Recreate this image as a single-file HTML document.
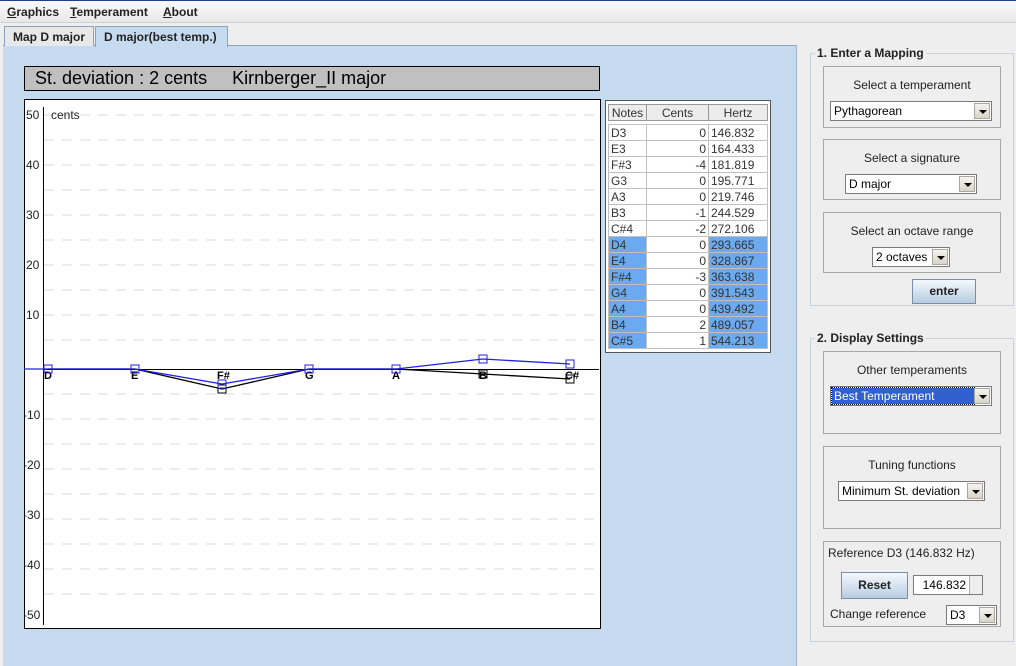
<!DOCTYPE html>
<html><head><style>
*{margin:0;padding:0;box-sizing:border-box}
body{width:1016px;height:666px;background:#eeeeee;font-family:"Liberation Sans",Arial,sans-serif;font-size:12px;position:relative;overflow:hidden;color:#000}
.a{position:absolute}
.menu{left:0;top:0;width:1016px;height:23px;background:linear-gradient(#fafafa,#e8e8e8);border-top:1px solid #1c3f8f;border-bottom:1px solid #d0d0d0}
.menu span{position:absolute;top:4px;font-weight:bold;font-size:12px;color:#222}
.tab{top:26px;height:20px;border:1px solid #8da2bd;border-bottom:none;font-weight:bold;font-size:12px;padding:3px 8px;color:#222}
.fs{border:1px solid #c8d2dc}
.fs .lg{position:absolute;top:-8px;left:4px;background:#eeeeee;font-weight:bold;padding:0 2px;font-size:12px;color:#222}
.box{border:1px solid #a8a8a8;text-align:center;font-size:12px;color:#222}
.cb{position:absolute;background:#fff;border:1px solid #7a7a7a;height:20px;font-size:12px;padding:2px 3px;text-align:left}
.cb .ar{position:absolute;right:1px;top:1px;width:16px;height:16px;background:linear-gradient(#f4f3ee,#d8d4c8);border:1px solid #a8a8a0}
.cb .ar:after{content:"";position:absolute;left:4px;top:6px;border-left:4px solid transparent;border-right:4px solid transparent;border-top:4px solid #000}
.btn{position:absolute;background:linear-gradient(#f4f8fc,#b8cde2);border:1px solid #7a8ea8;font-weight:bold;text-align:center;font-size:12px;color:#222}
table{border-collapse:collapse;font-size:12px}
td{height:16px;padding:0 2px;border:1px solid #c0c0c0;color:#333}
.hl td.n,.hl td.h{background:#6aaaf0}
</style></head><body>
<div class="a menu"><span style="left:7px"><u>G</u>raphics</span><span style="left:70px"><u>T</u>emperament</span><span style="left:163px"><u>A</u>bout</span></div>
<div class="a" style="left:3px;top:45px;width:794px;height:621px;background:#c6dbef;border-top:1px solid #8da2bd;border-right:1px solid #a0b4c8"></div>
<div class="a tab" style="left:4px;background:#e8e8e8">Map D major</div>
<div class="a tab" style="left:95px;width:133px;height:21px;background:#c6dbef">D major(best temp.)</div>
<div class="a" style="left:24px;top:66px;width:576px;height:25px;background:#c0c0c0;border:1px solid #000;font-size:18px;padding:1px 0 0 10px;white-space:pre">St. deviation : 2 cents     Kirnberger_II major</div>
<svg class="a" style="left:24px;top:99px" width="577" height="530" font-family="Liberation Sans,Arial,sans-serif" font-size="12">
<rect x="0.5" y="0.5" width="576" height="529" fill="#fff" stroke="#000"/>
<g stroke="#d8d8d8" stroke-dasharray="10,8">
<line x1="20" x2="575" y1="16" y2="16"/><line x1="20" x2="575" y1="41" y2="41"/><line x1="20" x2="575" y1="66" y2="66"/><line x1="20" x2="575" y1="91" y2="91"/><line x1="20" x2="575" y1="116" y2="116"/><line x1="20" x2="575" y1="141" y2="141"/><line x1="20" x2="575" y1="166" y2="166"/><line x1="20" x2="575" y1="191" y2="191"/><line x1="20" x2="575" y1="216" y2="216"/><line x1="20" x2="575" y1="241" y2="241"/><line x1="20" x2="575" y1="295" y2="295"/><line x1="20" x2="575" y1="320" y2="320"/><line x1="20" x2="575" y1="345" y2="345"/><line x1="20" x2="575" y1="370" y2="370"/><line x1="20" x2="575" y1="395" y2="395"/><line x1="20" x2="575" y1="420" y2="420"/><line x1="20" x2="575" y1="445" y2="445"/><line x1="20" x2="575" y1="470" y2="470"/><line x1="20" x2="575" y1="495" y2="495"/>
</g>
<line x1="19.5" x2="19.5" y1="8" y2="526" stroke="#000"/>
<line x1="19" x2="575" y1="270.5" y2="270.5" stroke="#000"/>
<g fill="#222"><text x="2" y="20">50</text><text x="27" y="20">cents</text><text x="2" y="70">40</text><text x="2" y="120">30</text><text x="2" y="170">20</text><text x="2" y="220">10</text><text x="-1" y="320">-10</text><text x="-1" y="370">-20</text><text x="-1" y="420">-30</text><text x="-1" y="470">-40</text><text x="-1" y="520">-50</text></g>
<g font-weight="bold" font-size="11"><text x="20" y="280">D</text><text x="107" y="280">E</text><text x="193" y="280">F#</text><text x="281" y="280">G</text><text x="368" y="280">A</text><text x="455" y="280">B</text><text x="541" y="280">C#</text></g>
<polyline fill="none" stroke="#000" stroke-width="1.3" points="24,270 111,270 198,290 285,270 372,270 459,275 546,280"/>
<g fill="none" stroke="#000"><rect x="20" y="266" width="8" height="8"/><rect x="107" y="266" width="8" height="8"/><rect x="194" y="286" width="8" height="8"/><rect x="281" y="266" width="8" height="8"/><rect x="368" y="266" width="8" height="8"/><rect x="455" y="271" width="8" height="8"/><rect x="542" y="276" width="8" height="8"/></g>
<polyline fill="none" stroke="#2020e0" stroke-width="1.3" points="0,270 24,270 111,270 198,285 285,270 372,270 459,260 546,265"/>
<g fill="none" stroke="#2020e0"><rect x="20" y="266" width="8" height="8"/><rect x="107" y="266" width="8" height="8"/><rect x="194" y="281" width="8" height="8"/><rect x="281" y="266" width="8" height="8"/><rect x="368" y="266" width="8" height="8"/><rect x="455" y="256" width="8" height="8"/><rect x="542" y="261" width="8" height="8"/></g>
</svg>
<div class="a" style="left:605px;top:100px;width:166px;height:253px;background:#fff;border:1px solid #555">
<table style="position:absolute;left:2px;top:3px;width:160px">
<tr style="background:#ececec"><td style="width:38px;text-align:center;border-color:#999">Notes</td><td style="width:62px;text-align:center;border-color:#999">Cents</td><td style="text-align:center;border-color:#999">Hertz</td></tr>
<tr><td colspan="3" style="height:4px;border:none;padding:0"></td></tr>
<tr><td class="n">D3</td><td align="right">0</td><td class="h">146.832</td></tr>
<tr><td class="n">E3</td><td align="right">0</td><td class="h">164.433</td></tr>
<tr><td class="n">F#3</td><td align="right">-4</td><td class="h">181.819</td></tr>
<tr><td class="n">G3</td><td align="right">0</td><td class="h">195.771</td></tr>
<tr><td class="n">A3</td><td align="right">0</td><td class="h">219.746</td></tr>
<tr><td class="n">B3</td><td align="right">-1</td><td class="h">244.529</td></tr>
<tr><td class="n">C#4</td><td align="right">-2</td><td class="h">272.106</td></tr>
<tr class="hl"><td class="n">D4</td><td align="right">0</td><td class="h">293.665</td></tr>
<tr class="hl"><td class="n">E4</td><td align="right">0</td><td class="h">328.867</td></tr>
<tr class="hl"><td class="n">F#4</td><td align="right">-3</td><td class="h">363.638</td></tr>
<tr class="hl"><td class="n">G4</td><td align="right">0</td><td class="h">391.543</td></tr>
<tr class="hl"><td class="n">A4</td><td align="right">0</td><td class="h">439.492</td></tr>
<tr class="hl"><td class="n">B4</td><td align="right">2</td><td class="h">489.057</td></tr>
<tr class="hl"><td class="n">C#5</td><td align="right">1</td><td class="h">544.213</td></tr>
</table></div>

<div class="a fs" style="left:810px;top:53px;width:204px;height:253px"><div class="lg">1. Enter a Mapping</div></div>
<div class="a box" style="left:823px;top:66px;width:178px;height:62px;padding-top:11px">Select a temperament</div>
<div class="a cb" style="left:830px;top:101px;width:162px">Pythagorean<div class="ar"></div></div>
<div class="a box" style="left:823px;top:139px;width:178px;height:61px;padding-top:11px">Select a signature</div>
<div class="a cb" style="left:845px;top:174px;width:132px">D major<div class="ar"></div></div>
<div class="a box" style="left:823px;top:212px;width:178px;height:61px;padding-top:11px">Select an octave range</div>
<div class="a cb" style="left:872px;top:247px;width:78px">2 octaves<div class="ar"></div></div>
<div class="btn" style="left:912px;top:279px;width:64px;height:25px;line-height:23px">enter</div>

<div class="a fs" style="left:810px;top:338px;width:204px;height:304px"><div class="lg">2. Display Settings</div></div>
<div class="a box" style="left:823px;top:351px;width:178px;height:83px;padding-top:11px">Other temperaments</div>
<div class="a cb" style="left:830px;top:386px;width:162px;padding:1px"><div style="background:#3060d0;color:#fff;height:16px;width:142px;padding:1px 2px;outline:1px dotted #000">Best Temperament</div><div class="ar"></div></div>
<div class="a box" style="left:823px;top:446px;width:178px;height:83px;padding-top:11px">Tuning functions</div>
<div class="a cb" style="left:838px;top:481px;width:147px">Minimum St. deviation<div class="ar"></div></div>
<div class="a box" style="left:823px;top:541px;width:178px;height:86px;text-align:left;padding:4px 0 0 4px">Reference D3 (146.832 Hz)</div>
<div class="btn" style="left:841px;top:572px;width:67px;height:27px;line-height:25px">Reset</div>
<div class="a" style="left:913px;top:575px;width:70px;height:20px;background:#fff;border:1px solid #7a7a7a;text-align:right;padding:2px 16px 0 0">146.832<div style="position:absolute;right:0;top:0;width:13px;height:18px;background:#eee;border-left:1px solid #aaa"></div></div>
<div class="a" style="left:830px;top:607px;color:#222">Change reference</div>
<div class="a cb" style="left:946px;top:605px;width:51px">D3<div class="ar"></div></div>
</body></html>
